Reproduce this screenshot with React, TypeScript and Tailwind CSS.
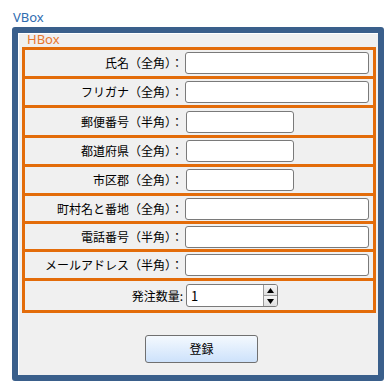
import React from "react";

const FONT = '"Noto Sans CJK JP", "Noto Sans", sans-serif';

function Label({ text }: { text: string }) {
  return (
    <div className="w-[158px] shrink-0 text-right text-[12px] leading-[16px] text-black whitespace-nowrap">
      {text}
    </div>
  );
}

type Row = { label: string; h: string; kind: "long" | "short" | "spin" };

const rows: Row[] = [
  { label: "氏名（全角）：", h: "h-[29px]", kind: "long" },
  { label: "フリガナ（全角）：", h: "h-[29px]", kind: "long" },
  { label: "郵便番号（半角）：", h: "h-[30px]", kind: "short" },
  { label: "都道府県（全角）：", h: "h-[29px]", kind: "short" },
  { label: "市区郡（全角）：", h: "h-[29px]", kind: "short" },
  { label: "町村名と番地（全角）：", h: "h-[28px]", kind: "long" },
  { label: "電話番号（半角）：", h: "h-[28px]", kind: "long" },
  { label: "メールアドレス（半角）：", h: "h-[29px]", kind: "long" },
  { label: "発注数量:", h: "h-[32px]", kind: "spin" },
];

function Field({ kind }: { kind: Row["kind"] }) {
  if (kind === "long") {
    return <div className="ml-[2px] w-[184px] h-[22px] bg-white border border-[#7a7a7a] rounded-[3px]" />;
  }
  if (kind === "short") {
    return <div className="ml-[3px] w-[108px] h-[22px] bg-white border border-[#7a7a7a] rounded-[3px]" />;
  }
  return (
    <div className="ml-[3px] w-[92px] h-[23px] bg-white border border-[#7a7a7a] rounded-[3px] flex">
      <div className="flex-1 flex items-center pl-[4px] text-[13px] leading-[16px] text-black">1</div>
      <div className="w-[14px] flex flex-col border-l border-[#9a9a9a]">
        <div className="flex-1 flex items-center justify-center bg-linear-to-b from-[#f6f6f6] to-[#dedede] border-b border-[#9a9a9a] rounded-tr-[2px]">
          <svg width="7" height="5" viewBox="0 0 7 5">
            <polygon points="3.5,0 7,5 0,5" fill="#000" />
          </svg>
        </div>
        <div className="flex-1 flex items-center justify-center bg-linear-to-b from-[#f6f6f6] to-[#dedede] rounded-br-[2px]">
          <svg width="7" height="5" viewBox="0 0 7 5">
            <polygon points="0,0 7,0 3.5,5" fill="#000" />
          </svg>
        </div>
      </div>
    </div>
  );
}

export default function App() {
  return (
    <div className="w-[387px] h-[384px] bg-white overflow-hidden" style={{ fontFamily: FONT }}>
      <div className="pt-[9px] pl-[13px] h-[25px] text-[13px] leading-[16px] text-[#2f6cb0]" style={{ fontFamily: '"Noto Sans", sans-serif' }}>
        VBox
      </div>
      <div className="ml-[12px] mt-[2px] w-[372px] h-[354px] border-[6px] border-[#3a5f8b] rounded-[3px] bg-[#f0f0f0] shadow-[inset_1px_1px_0_#ffffff] pl-[4px] pr-[2px] flex flex-col">
        <div className="h-[12px] leading-[12px] pl-[5px] text-[13px] text-[#e8772e]" style={{ fontFamily: '"Noto Sans", sans-serif' }}>
          HBox
        </div>
        <div className="mt-[2px] border-t-[3px] border-[#e36c0a] flex flex-col">
          {rows.map((r, i) => (
            <div
              key={i}
              className={`${r.h} box-border border-x-[3px] border-b-[3px] border-[#e36c0a] flex items-center`}
            >
              <Label text={r.label} />
              <Field kind={r.kind} />
            </div>
          ))}
        </div>
        <div className="mt-[22px] ml-[123px] w-[113px] h-[28px] rounded-[3px] border border-[#707070] bg-linear-to-b from-[#f4f9fe] to-[#cde2fb] flex items-center justify-center text-[12px] leading-[16px] text-black">
          登録
        </div>
      </div>
    </div>
  );
}
